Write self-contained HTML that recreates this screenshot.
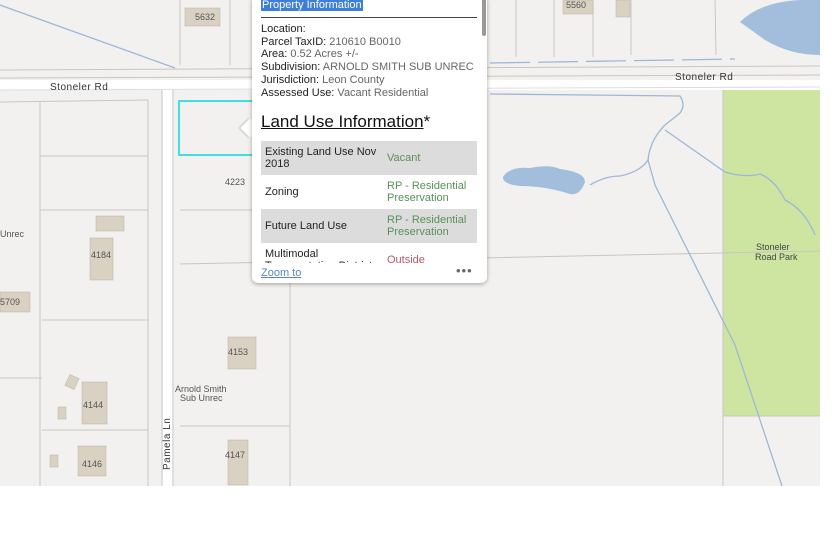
<!DOCTYPE html>
<html><head><meta charset="utf-8"><style>
body{margin:0;width:840px;height:551px;background:#fff;position:relative;overflow:hidden;font-family:"Liberation Sans",sans-serif}
svg{position:absolute;left:0;top:0}
.pop{position:absolute;left:252px;top:-2px;width:235px;height:285px;background:#fff;border-radius:0 0 6px 6px;box-shadow:0 1px 4px rgba(0,0,0,.35);font-size:11px;color:#222}
.ptr{position:absolute;left:243px;top:121px;width:14px;height:14px;background:#fff;transform:rotate(45deg);box-shadow:-1px 1px 2px rgba(0,0,0,.2)}
.in{position:absolute;left:9px;top:0;width:216px}
.g{color:#666}
table{border-collapse:collapse;width:216px;font-size:11px}
td{padding:0 4px;vertical-align:middle;height:34px;line-height:12.5px}
.sh td{background:#dcdcdc}
.v{color:#5a8f5a}
</style></head><body>
<svg width="840" height="551" viewBox="0 0 840 551">
<rect x="0" y="0" width="820" height="486" fill="#f2f1ef"/>
<rect x="723" y="87" width="97" height="329" fill="#cde5a1"/>
<g stroke="#c8c6c2" stroke-width="1" fill="none">
<line x1="0" y1="70" x2="820" y2="66"/><line x1="0" y1="78" x2="820" y2="75"/>
<line x1="180" y1="0" x2="180" y2="65"/><line x1="230" y1="0" x2="230" y2="65"/>
<line x1="516" y1="0" x2="516" y2="57"/><line x1="554" y1="0" x2="554" y2="57"/><line x1="593" y1="0" x2="593" y2="57"/><line x1="631" y1="0" x2="631" y2="55"/><line x1="715" y1="0" x2="716" y2="55"/>
<line x1="40" y1="102" x2="40" y2="486"/><line x1="148" y1="100" x2="148" y2="486"/>
<line x1="40" y1="156" x2="148" y2="156"/><line x1="40" y1="210" x2="148" y2="210"/><line x1="42" y1="320" x2="148" y2="320"/><line x1="0" y1="378" x2="42" y2="378"/><line x1="42" y1="430" x2="148" y2="430"/>
<line x1="0" y1="102" x2="148" y2="100"/>
<line x1="180" y1="210" x2="290" y2="210"/><line x1="180" y1="264" x2="820" y2="251"/><line x1="180" y1="426" x2="290" y2="426"/>
<line x1="290" y1="264" x2="290" y2="486"/>
<line x1="723" y1="87" x2="723" y2="486"/><line x1="723" y1="416" x2="820" y2="416"/>
</g>
<rect x="0" y="80" width="820" height="10" fill="#fff"/>
<rect x="163" y="90" width="9" height="396" fill="#fff"/>
<line x1="162" y1="90" x2="162" y2="486" stroke="#ccc"/><line x1="173" y1="90" x2="173" y2="486" stroke="#ccc"/>
<line x1="0" y1="90" x2="820" y2="87" stroke="#ddd"/>
<rect x="179" y="101" width="75" height="54" fill="none" stroke="#3fe0e0" stroke-width="2"/>
<path d="M740 22 Q760 2 800 0 L820 0 L820 55 Q790 55 765 40 Z" fill="#a3bedc"/>
<path d="M503 177 Q510 166 530 168 Q550 164 560 169 Q585 172 585 182 Q580 196 570 194 Q545 186 520 186 Q502 184 503 177Z" fill="#a3bedc"/>
<g stroke="#9db8d6" stroke-width="1.3" fill="none">
<path d="M0 5 L175 68"/><path d="M490 94 L680 96 Q686 105 680 113 L665 125 Q650 140 648 160 Q640 172 620 176 Q605 176 590 185"/>
<path d="M665 130 L725 172 Q745 178 760 174 Q775 180 785 200 Q805 210 815 235"/>
<path d="M648 160 L655 185 L735 345 Q750 390 775 465 L782 486"/>
<path d="M490 63 L735 59" stroke-dasharray="40 8"/>
</g>
<g fill="#d9d2c3" stroke="#b9b2a5" stroke-width=".5">
<rect x="185" y="8" width="35" height="18"/><rect x="563" y="0" width="30" height="14"/><rect x="616" y="0" width="14" height="17"/>
<rect x="96" y="216" width="28" height="15"/><rect x="90" y="238" width="23" height="42"/>
<rect x="0" y="292" width="30" height="20"/><rect x="228" y="337" width="28" height="32"/>
<rect x="82" y="382" width="25" height="42"/><rect x="58" y="407" width="8" height="12"/><rect x="67" y="376" width="10" height="12" transform="rotate(25 72 382)"/>
<rect x="78" y="446" width="28" height="30"/><rect x="50" y="455" width="8" height="12"/><rect x="228" y="440" width="20" height="45"/>
</g>
<g font-family="Liberation Sans" fill="#555" font-size="9">
<text x="195" y="20">5632</text><text x="566" y="8">5560</text><text x="225" y="185">4223</text>
<text x="91" y="258">4184</text><text x="0" y="305">5709</text><text x="228" y="355">4153</text>
<text x="83" y="408">4144</text><text x="82" y="467">4146</text><text x="225" y="458">4147</text>
<text x="0" y="237">Unrec</text><text x="175" y="392">Arnold Smith</text><text x="180" y="401">Sub Unrec</text>
<text x="756" y="250" fill="#444">Stoneler</text><text x="755" y="260" fill="#444">Road Park</text>
</g>
<g font-family="Liberation Sans" fill="#333" font-size="10" letter-spacing=".5">
<text x="50" y="90">Stoneler  Rd</text><text x="675" y="80">Stoneler  Rd</text>
<text transform="translate(170 470) rotate(-90)">Pamela  Ln</text>
</g>
</svg>
<div class="ptr"></div>
<div class="pop">
<div class="in">
<div style="margin-top:1px;height:12px"><span style="background:#3d7ed8;color:#fff;font-size:11px;padding:0 1px">Property Information</span></div>
<div style="border-top:1.5px solid #444;margin-top:6px;width:216px"></div>
<div style="margin-top:5px;line-height:12.7px">Location:<br>Parcel TaxID: <span class="g">210610 B0010</span><br>Area: <span class="g">0.52 Acres +/-</span><br>Subdivision: <span class="g">ARNOLD SMITH SUB UNREC</span><br>Jurisdiction: <span class="g">Leon County</span><br>Assessed Use: <span class="g">Vacant Residential</span></div>
<div style="margin-top:13px;font-size:17px;color:#111"><u>Land Use Information</u>*</div>
<div style="height:122px;overflow:hidden;margin-top:9px">
<table>
<tr class="sh"><td style="width:114px">Existing Land Use Nov 2018</td><td class="v">Vacant</td></tr>
<tr><td>Zoning</td><td class="v">RP - Residential Preservation</td></tr>
<tr class="sh"><td>Future Land Use</td><td class="v">RP - Residential Preservation</td></tr>
<tr><td>Multimodal Transportation District</td><td style="color:#b55a6a">Outside</td></tr>
</table></div>
<div style="position:absolute;top:269px;left:0;color:#5a88b8;text-decoration:underline">Zoom to</div>
<div style="position:absolute;top:265px;left:195px;color:#666;font-size:13px;letter-spacing:1px">•••</div>
</div>
<div style="position:absolute;right:1px;top:0;width:4px;height:38px;background:#999;border-radius:2px"></div>
</div>
</body></html>
